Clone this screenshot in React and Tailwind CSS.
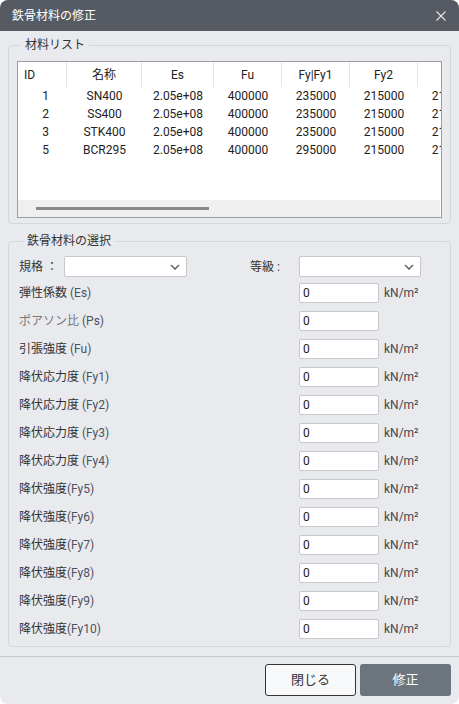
import React from 'react'

const columns = [
  { key: 'id', label: 'ID', w: 'w-[49px]' },
  { key: 'name', label: '名称', w: 'w-[75px]' },
  { key: 'es', label: 'Es', w: 'w-[72px]' },
  { key: 'fu', label: 'Fu', w: 'w-[68px]' },
  { key: 'fy1', label: 'Fy|Fy1', w: 'w-[68px]' },
  { key: 'fy2', label: 'Fy2', w: 'w-[68px]' },
  { key: 'fy3', label: 'Fy3', w: 'w-[68px]' },
]

const materials = [
  { id: 1, name: 'SN400', es: '2.05e+08', fu: '400000', fy1: '235000', fy2: '215000', fy3: '215000' },
  { id: 2, name: 'SS400', es: '2.05e+08', fu: '400000', fy1: '235000', fy2: '215000', fy3: '215000' },
  { id: 3, name: 'STK400', es: '2.05e+08', fu: '400000', fy1: '235000', fy2: '215000', fy3: '215000' },
  { id: 5, name: 'BCR295', es: '2.05e+08', fu: '400000', fy1: '295000', fy2: '215000', fy3: '215000' },
]

const fields = [
  { jp: '弾性係数 ', en: '(Es)', unit: true },
  { jp: 'ポアソン比 ', en: '(Ps)', unit: false, muted: true },
  { jp: '引張強度 ', en: '(Fu)', unit: true },
  { jp: '降伏応力度 ', en: '(Fy1)', unit: true },
  { jp: '降伏応力度 ', en: '(Fy2)', unit: true },
  { jp: '降伏応力度 ', en: '(Fy3)', unit: true },
  { jp: '降伏応力度 ', en: '(Fy4)', unit: true },
  { jp: '降伏強度', en: '(Fy5)', unit: true },
  { jp: '降伏強度', en: '(Fy6)', unit: true },
  { jp: '降伏強度', en: '(Fy7)', unit: true },
  { jp: '降伏強度', en: '(Fy8)', unit: true },
  { jp: '降伏強度', en: '(Fy9)', unit: true },
  { jp: '降伏強度', en: '(Fy10)', unit: true },
]

function Chevron() {
  return (
    <svg width="10" height="6" viewBox="0 0 10 6" className="text-[#666]">
      <polyline points="1,1 5,5 9,1" fill="none" stroke="currentColor" strokeWidth="1.6" />
    </svg>
  )
}

function SelectBox({ width }) {
  return (
    <div className={`flex h-[21px] ${width} items-center justify-end rounded-[2px] border border-[#c6c8cc] bg-white pr-[6px]`}>
      <Chevron />
    </div>
  )
}

export default function App() {
  return (
    <div className="h-[704px] w-[459px] bg-white font-['Roboto','Noto_Sans_CJK_JP',sans-serif] text-[12px] text-[#333]">
      <div className="flex h-full flex-col overflow-hidden rounded-lg bg-[#e9eaee]">
        {/* title bar */}
        <header className="flex h-[31px] shrink-0 items-center justify-between bg-[#565b63] pl-3 pr-[13px] text-white">
          <span className="leading-none">鉄骨材料の修正</span>
          <svg width="10" height="10" viewBox="0 0 10 10">
            <path d="M0.5 0.5 L9.5 9.5 M9.5 0.5 L0.5 9.5" stroke="#e4e6e9" strokeWidth="1.1" />
          </svg>
        </header>

        <main className="flex min-w-0 flex-col px-2 pt-[6px]">
          {/* material list */}
          <fieldset className="min-w-0 rounded-[4px] border border-[#d3d6da] px-2 pb-[5px]">
            <legend className="ml-[4px] px-1 text-[12px] leading-[16px]">材料リスト</legend>
            <div className="mt-2 flex h-[157px] min-w-0 flex-col overflow-hidden border border-[#9a9da2] bg-white">
              <div className="min-w-0 flex-1 overflow-hidden">
                <div className="flex h-[25px] w-max items-center text-[#222]">
                  {columns.map((c) => (
                    <div
                      key={c.key}
                      className={`${c.w} flex h-full shrink-0 items-center border-r border-[#e4e4e4] ${c.key === 'id' ? 'pl-[6px]' : 'justify-center'}`}
                    >
                      {c.label}
                    </div>
                  ))}
                </div>
                {materials.map((m) => (
                  <div key={m.id} className="flex h-[18px] w-max items-center text-[#222]">
                    {columns.map((c) => (
                      <div
                        key={c.key}
                        className={`${c.w} shrink-0 ${c.key === 'id' ? 'pr-[18px] text-right' : 'text-center'}`}
                      >
                        {m[c.key]}
                      </div>
                    ))}
                  </div>
                ))}
              </div>
              <div className="mr-[1px] flex h-[17px] shrink-0 items-center bg-[#efefef] pl-[18px]">
                <div className="h-[3px] w-[173px] bg-[#878787]" />
              </div>
            </div>
          </fieldset>

          {/* material selection */}
          <fieldset className="mt-[9px] min-w-0 rounded-[4px] border border-[#d3d6da] pb-[7px] pl-[10px] pr-2">
            <legend className="ml-[4px] px-1 text-[12px] leading-[16px]">鉄骨材料の選択</legend>
            <div className="flex flex-col gap-2 pt-[7px]">
              <div className="mb-[-2px] flex h-[21px] items-center">
                <span className="w-[45px]">規格 ：</span>
                <SelectBox width="w-[123px]" />
                <span className="ml-[63px] w-[49px]">等級 :</span>
                <SelectBox width="w-[122px]" />
              </div>
              {fields.map((f) => (
                <div key={f.en} className="flex h-[20px] items-center">
                  <span className={`w-[280px] ${f.muted ? 'text-[#777]' : ''}`}>
                    {f.jp}
                    <span className="text-[#4a5262]">{f.en}</span>
                  </span>
                  <div className="flex h-[20px] w-[80px] items-center rounded-[2px] border border-[#c6c8cc] bg-white pl-[3px] text-[#222]">
                    0
                  </div>
                  {f.unit && <span className="ml-[5px] text-[#444]">kN/m²</span>}
                </div>
              ))}
            </div>
          </fieldset>
        </main>

        {/* footer buttons */}
        <footer className="mt-[9px] flex justify-end gap-[4px] border-t border-[#c5c9ce] px-2 pt-[7px]">
          <button className="h-[32px] w-[91px] rounded-[3px] border border-[#333] bg-[#f8f9fa] text-[13px] text-[#333]">
            閉じる
          </button>
          <button className="h-[32px] w-[91px] rounded-[3px] bg-[#6c757d] text-[13px] text-white">
            修正
          </button>
        </footer>
      </div>
    </div>
  )
}
